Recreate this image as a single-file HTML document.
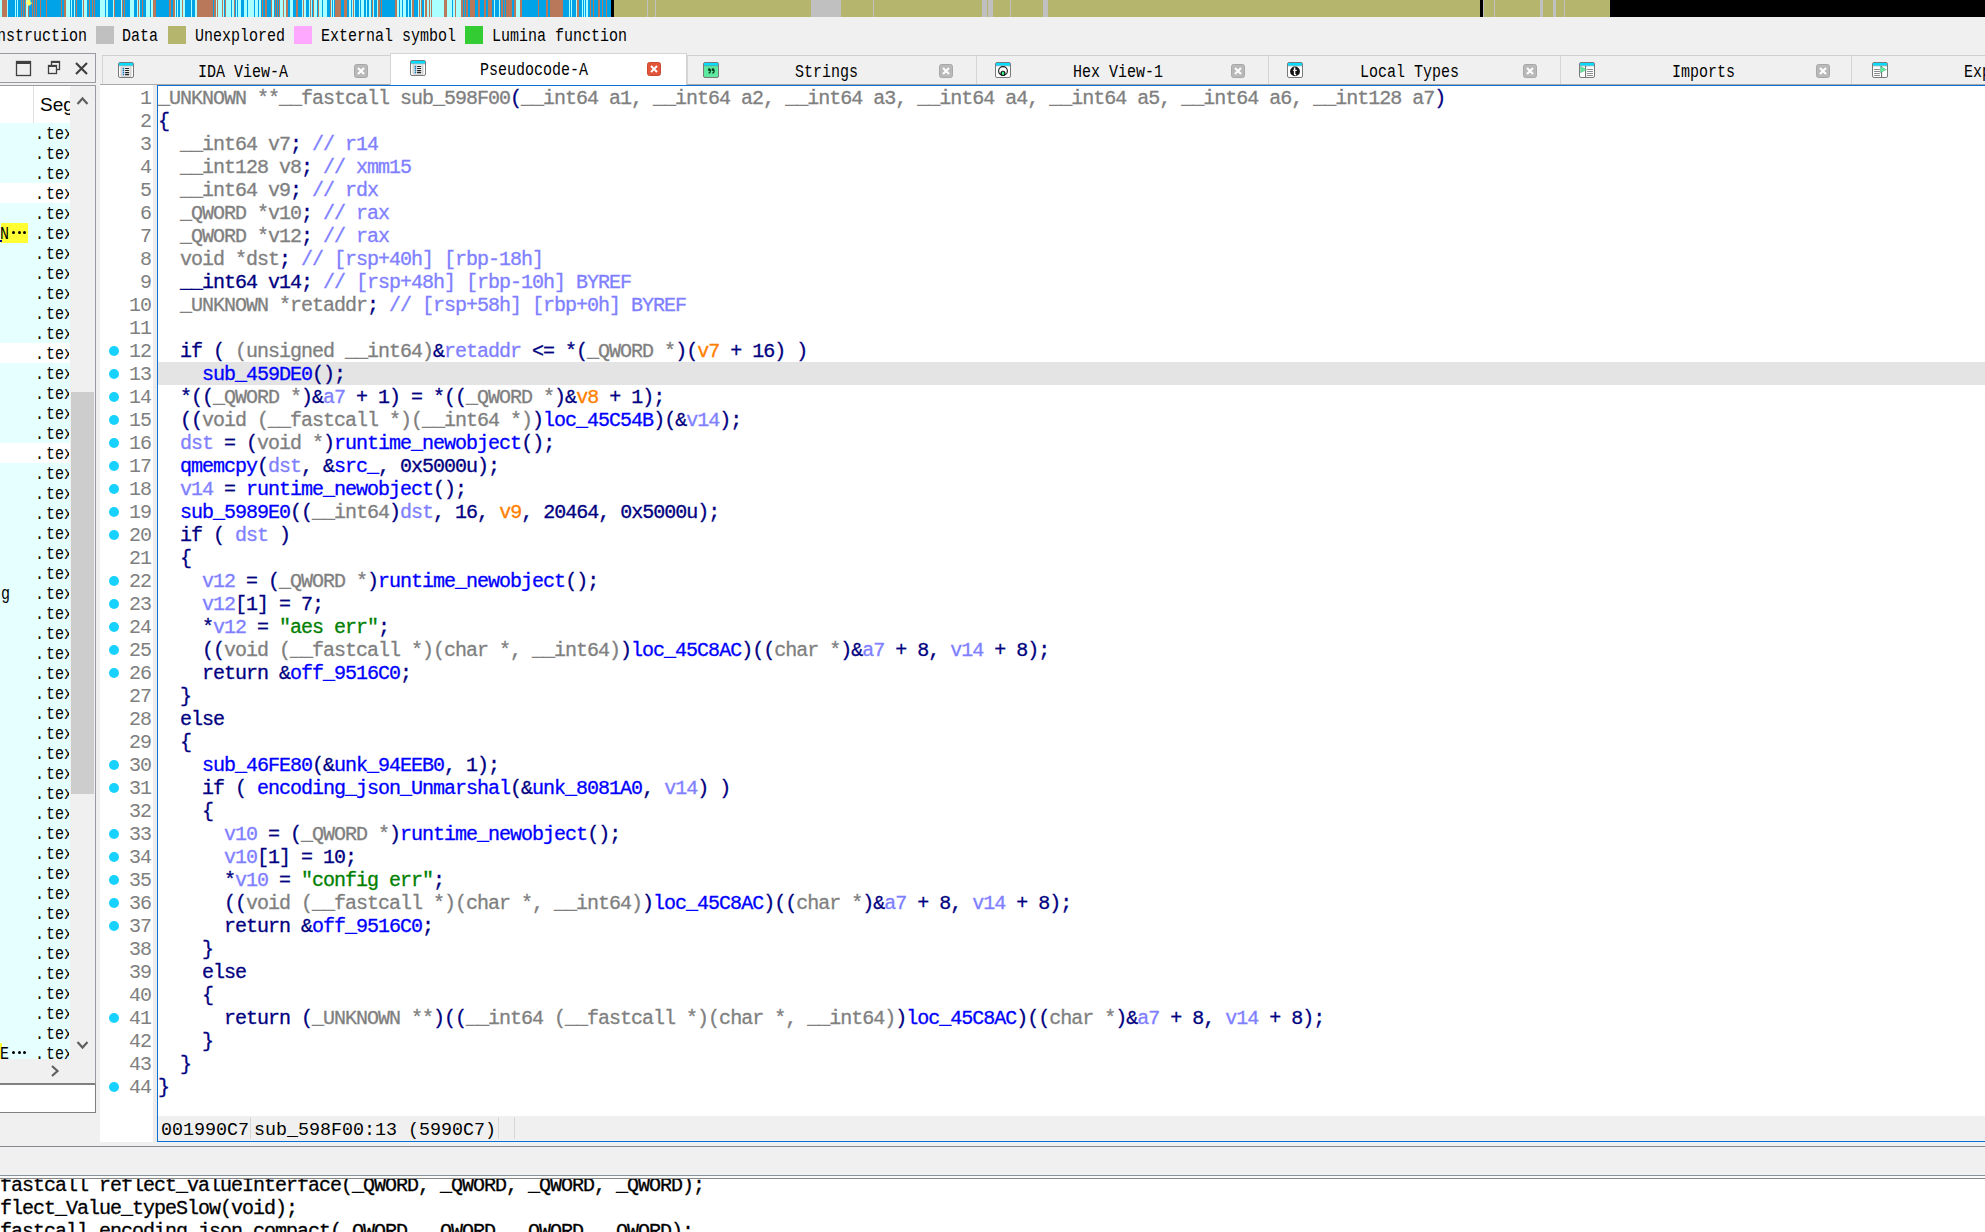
<!DOCTYPE html>
<html><head><meta charset="utf-8"><title>IDA</title><style>
html,body{margin:0;padding:0}
body{width:1985px;height:1232px;position:relative;overflow:hidden;background:#f0f0f0}
.ui{position:absolute;white-space:pre;font-family:"Liberation Mono",monospace;font-size:18px;line-height:20px;color:#000;transform:scaleX(0.83322);transform-origin:0 0}
.sq{position:absolute;top:26px;width:18px;height:18px}
.cl{position:absolute;left:158px;white-space:pre;font-family:"Liberation Mono",monospace;font-size:20px;letter-spacing:-1px;line-height:23px;height:23px;color:#000080;-webkit-text-stroke:0.3px currentColor}
.ln{position:absolute;left:100px;width:51px;text-align:right;white-space:pre;font-family:"Liberation Mono",monospace;font-size:20px;letter-spacing:-1px;line-height:23px;color:#808080}
.dot{position:absolute;left:109px;width:10px;height:10px;border-radius:50%;background:#17d1ff}
.g{color:#808080}.n{color:#000080}.b{color:#0000ff}.v{color:#8080ff}.o{color:#ff8000}.s{color:#008000}.c{color:#8080ff}
.ol{color:#000;left:0}
</style></head>
<body><svg style="position:absolute;left:0;top:0" width="1985" height="17" shape-rendering="crispEdges"><rect x="0" y="0" width="611" height="17" fill="#00a2e8"/><rect x="0.0" y="0" width="2.0" height="17" fill="#aaffff"/><rect x="7.0" y="0" width="1.0" height="17" fill="#aaffff"/><rect x="15.0" y="0" width="1.0" height="17" fill="#aaffff"/><rect x="17.0" y="0" width="1.0" height="17" fill="#aaffff"/><rect x="21.0" y="0" width="1.0" height="17" fill="#aaffff"/><rect x="26.0" y="0" width="2.0" height="17" fill="#aaffff"/><rect x="66.0" y="0" width="4.0" height="17" fill="#aaffff"/><rect x="71.0" y="0" width="1.0" height="17" fill="#aaffff"/><rect x="74.0" y="0" width="1.0" height="17" fill="#aaffff"/><rect x="81.5" y="0" width="1.2" height="17" fill="#aaffff"/><rect x="84.0" y="0" width="3.0" height="17" fill="#aaffff"/><rect x="99.6" y="0" width="5.4" height="17" fill="#aaffff"/><rect x="106.0" y="0" width="2.0" height="17" fill="#aaffff"/><rect x="113.0" y="0" width="1.0" height="17" fill="#aaffff"/><rect x="121.0" y="0" width="1.0" height="17" fill="#aaffff"/><rect x="130.0" y="0" width="4.0" height="17" fill="#aaffff"/><rect x="137.0" y="0" width="1.0" height="17" fill="#aaffff"/><rect x="139.0" y="0" width="1.0" height="17" fill="#aaffff"/><rect x="146.0" y="0" width="4.0" height="17" fill="#aaffff"/><rect x="151.0" y="0" width="2.0" height="17" fill="#aaffff"/><rect x="175.0" y="0" width="1.0" height="17" fill="#aaffff"/><rect x="177.0" y="0" width="1.0" height="17" fill="#aaffff"/><rect x="180.0" y="0" width="2.0" height="17" fill="#aaffff"/><rect x="183.0" y="0" width="2.0" height="17" fill="#aaffff"/><rect x="191.0" y="0" width="1.0" height="17" fill="#aaffff"/><rect x="195.0" y="0" width="2.0" height="17" fill="#aaffff"/><rect x="215.5" y="0" width="1.5" height="17" fill="#aaffff"/><rect x="218.0" y="0" width="4.0" height="17" fill="#aaffff"/><rect x="223.0" y="0" width="1.0" height="17" fill="#aaffff"/><rect x="226.0" y="0" width="5.0" height="17" fill="#aaffff"/><rect x="232.0" y="0" width="2.0" height="17" fill="#aaffff"/><rect x="235.5" y="0" width="1.5" height="17" fill="#aaffff"/><rect x="238.0" y="0" width="3.0" height="17" fill="#aaffff"/><rect x="244.0" y="0" width="3.0" height="17" fill="#aaffff"/><rect x="248.0" y="0" width="6.0" height="17" fill="#aaffff"/><rect x="255.0" y="0" width="3.0" height="17" fill="#aaffff"/><rect x="259.0" y="0" width="2.0" height="17" fill="#aaffff"/><rect x="272.0" y="0" width="2.0" height="17" fill="#aaffff"/><rect x="280.0" y="0" width="3.0" height="17" fill="#aaffff"/><rect x="284.0" y="0" width="2.0" height="17" fill="#aaffff"/><rect x="290.0" y="0" width="3.0" height="17" fill="#aaffff"/><rect x="302.0" y="0" width="1.0" height="17" fill="#aaffff"/><rect x="304.0" y="0" width="2.0" height="17" fill="#aaffff"/><rect x="309.0" y="0" width="1.0" height="17" fill="#aaffff"/><rect x="311.0" y="0" width="1.0" height="17" fill="#aaffff"/><rect x="314.0" y="0" width="3.0" height="17" fill="#aaffff"/><rect x="319.0" y="0" width="3.0" height="17" fill="#aaffff"/><rect x="323.0" y="0" width="4.0" height="17" fill="#aaffff"/><rect x="330.0" y="0" width="2.0" height="17" fill="#aaffff"/><rect x="333.0" y="0" width="1.0" height="17" fill="#aaffff"/><rect x="349.0" y="0" width="2.0" height="17" fill="#aaffff"/><rect x="352.0" y="0" width="1.0" height="17" fill="#aaffff"/><rect x="354.0" y="0" width="1.0" height="17" fill="#aaffff"/><rect x="359.0" y="0" width="1.0" height="17" fill="#aaffff"/><rect x="361.0" y="0" width="3.0" height="17" fill="#aaffff"/><rect x="366.0" y="0" width="1.0" height="17" fill="#aaffff"/><rect x="369.0" y="0" width="2.0" height="17" fill="#aaffff"/><rect x="373.0" y="0" width="1.0" height="17" fill="#aaffff"/><rect x="377.0" y="0" width="1.0" height="17" fill="#aaffff"/><rect x="397.0" y="0" width="2.0" height="17" fill="#aaffff"/><rect x="400.0" y="0" width="2.0" height="17" fill="#aaffff"/><rect x="403.0" y="0" width="3.0" height="17" fill="#aaffff"/><rect x="408.0" y="0" width="1.0" height="17" fill="#aaffff"/><rect x="411.0" y="0" width="1.0" height="17" fill="#aaffff"/><rect x="418.0" y="0" width="1.0" height="17" fill="#aaffff"/><rect x="420.0" y="0" width="1.0" height="17" fill="#aaffff"/><rect x="424.0" y="0" width="1.0" height="17" fill="#aaffff"/><rect x="427.0" y="0" width="2.0" height="17" fill="#aaffff"/><rect x="430.0" y="0" width="1.0" height="17" fill="#aaffff"/><rect x="432.0" y="0" width="12.0" height="17" fill="#aaffff"/><rect x="447.0" y="0" width="5.0" height="17" fill="#aaffff"/><rect x="453.0" y="0" width="2.0" height="17" fill="#aaffff"/><rect x="456.0" y="0" width="5.0" height="17" fill="#aaffff"/><rect x="494.0" y="0" width="1.0" height="17" fill="#aaffff"/><rect x="499.0" y="0" width="1.0" height="17" fill="#aaffff"/><rect x="516.0" y="0" width="4.0" height="17" fill="#aaffff"/><rect x="569.0" y="0" width="1.0" height="17" fill="#aaffff"/><rect x="571.0" y="0" width="1.0" height="17" fill="#aaffff"/><rect x="576.0" y="0" width="1.0" height="17" fill="#aaffff"/><rect x="582.0" y="0" width="1.0" height="17" fill="#aaffff"/><rect x="584.0" y="0" width="1.0" height="17" fill="#aaffff"/><rect x="586.0" y="0" width="2.0" height="17" fill="#aaffff"/><rect x="2.0" y="0" width="5.0" height="17" fill="#b9785a"/><rect x="20.5" y="0" width="1.0" height="17" fill="#b9785a"/><rect x="23.0" y="0" width="1.0" height="17" fill="#b9785a"/><rect x="25.0" y="0" width="1.0" height="17" fill="#b9785a"/><rect x="28.0" y="0" width="1.0" height="17" fill="#b9785a"/><rect x="31.5" y="0" width="1.0" height="17" fill="#b9785a"/><rect x="33.5" y="0" width="1.0" height="17" fill="#b9785a"/><rect x="35.5" y="0" width="1.0" height="17" fill="#b9785a"/><rect x="39.5" y="0" width="1.0" height="17" fill="#b9785a"/><rect x="46.4" y="0" width="1.0" height="17" fill="#b9785a"/><rect x="61.0" y="0" width="1.0" height="17" fill="#b9785a"/><rect x="64.0" y="0" width="2.0" height="17" fill="#b9785a"/><rect x="76.0" y="0" width="1.0" height="17" fill="#b9785a"/><rect x="83.0" y="0" width="1.0" height="17" fill="#b9785a"/><rect x="89.0" y="0" width="1.0" height="17" fill="#b9785a"/><rect x="91.5" y="0" width="1.0" height="17" fill="#b9785a"/><rect x="93.5" y="0" width="1.0" height="17" fill="#b9785a"/><rect x="114.0" y="0" width="1.0" height="17" fill="#b9785a"/><rect x="122.0" y="0" width="1.0" height="17" fill="#b9785a"/><rect x="123.5" y="0" width="1.0" height="17" fill="#b9785a"/><rect x="138.0" y="0" width="1.0" height="17" fill="#b9785a"/><rect x="142.0" y="0" width="1.0" height="17" fill="#b9785a"/><rect x="153.0" y="0" width="3.0" height="17" fill="#b9785a"/><rect x="169.0" y="0" width="2.0" height="17" fill="#b9785a"/><rect x="173.0" y="0" width="2.0" height="17" fill="#b9785a"/><rect x="182.0" y="0" width="1.0" height="17" fill="#b9785a"/><rect x="197.0" y="0" width="16.0" height="17" fill="#b9785a"/><rect x="214.0" y="0" width="2.0" height="17" fill="#b9785a"/><rect x="217.0" y="0" width="1.0" height="17" fill="#b9785a"/><rect x="222.0" y="0" width="1.0" height="17" fill="#b9785a"/><rect x="224.5" y="0" width="1.0" height="17" fill="#b9785a"/><rect x="234.0" y="0" width="1.0" height="17" fill="#b9785a"/><rect x="261.5" y="0" width="1.0" height="17" fill="#b9785a"/><rect x="265.0" y="0" width="2.0" height="17" fill="#b9785a"/><rect x="270.5" y="0" width="1.0" height="17" fill="#b9785a"/><rect x="274.5" y="0" width="1.0" height="17" fill="#b9785a"/><rect x="277.0" y="0" width="1.0" height="17" fill="#b9785a"/><rect x="279.0" y="0" width="1.0" height="17" fill="#b9785a"/><rect x="283.0" y="0" width="1.0" height="17" fill="#b9785a"/><rect x="286.0" y="0" width="2.0" height="17" fill="#b9785a"/><rect x="296.0" y="0" width="2.0" height="17" fill="#b9785a"/><rect x="303.0" y="0" width="1.0" height="17" fill="#b9785a"/><rect x="310.0" y="0" width="1.0" height="17" fill="#b9785a"/><rect x="313.0" y="0" width="1.0" height="17" fill="#b9785a"/><rect x="318.0" y="0" width="1.0" height="17" fill="#b9785a"/><rect x="329.5" y="0" width="1.0" height="17" fill="#b9785a"/><rect x="335.0" y="0" width="6.0" height="17" fill="#b9785a"/><rect x="344.0" y="0" width="3.0" height="17" fill="#b9785a"/><rect x="353.0" y="0" width="1.0" height="17" fill="#b9785a"/><rect x="372.0" y="0" width="1.0" height="17" fill="#b9785a"/><rect x="378.0" y="0" width="2.0" height="17" fill="#b9785a"/><rect x="380.5" y="0" width="1.0" height="17" fill="#b9785a"/><rect x="395.0" y="0" width="2.0" height="17" fill="#b9785a"/><rect x="412.0" y="0" width="2.0" height="17" fill="#b9785a"/><rect x="419.0" y="0" width="1.0" height="17" fill="#b9785a"/><rect x="421.0" y="0" width="1.0" height="17" fill="#b9785a"/><rect x="425.0" y="0" width="2.0" height="17" fill="#b9785a"/><rect x="429.0" y="0" width="1.0" height="17" fill="#b9785a"/><rect x="431.0" y="0" width="1.0" height="17" fill="#b9785a"/><rect x="444.0" y="0" width="3.0" height="17" fill="#b9785a"/><rect x="455.0" y="0" width="1.0" height="17" fill="#b9785a"/><rect x="461.0" y="0" width="2.0" height="17" fill="#b9785a"/><rect x="463.5" y="0" width="1.5" height="17" fill="#b9785a"/><rect x="466.0" y="0" width="2.0" height="17" fill="#b9785a"/><rect x="470.0" y="0" width="5.0" height="17" fill="#b9785a"/><rect x="478.0" y="0" width="2.0" height="17" fill="#b9785a"/><rect x="484.0" y="0" width="2.0" height="17" fill="#b9785a"/><rect x="488.0" y="0" width="4.0" height="17" fill="#b9785a"/><rect x="501.0" y="0" width="1.5" height="17" fill="#b9785a"/><rect x="504.0" y="0" width="1.0" height="17" fill="#b9785a"/><rect x="506.0" y="0" width="6.0" height="17" fill="#b9785a"/><rect x="513.5" y="0" width="2.5" height="17" fill="#b9785a"/><rect x="520.0" y="0" width="2.0" height="17" fill="#b9785a"/><rect x="538.0" y="0" width="1.0" height="17" fill="#b9785a"/><rect x="546.0" y="0" width="2.0" height="17" fill="#b9785a"/><rect x="550.0" y="0" width="13.0" height="17" fill="#b9785a"/><rect x="577.0" y="0" width="2.0" height="17" fill="#b9785a"/><rect x="590.0" y="0" width="1.0" height="17" fill="#b9785a"/><rect x="593.0" y="0" width="1.0" height="17" fill="#b9785a"/><rect x="598.0" y="0" width="1.5" height="17" fill="#b9785a"/><rect x="602.0" y="0" width="1.0" height="17" fill="#b9785a"/><rect x="605.5" y="0" width="1.0" height="17" fill="#b9785a"/><rect x="610.5" y="0" width="3.5" height="17" fill="#000000"/><rect x="614" y="0" width="996" height="17" fill="#b5b56d"/><rect x="647.0" y="0" width="1.0" height="17" fill="#c0c0c0"/><rect x="655.0" y="0" width="1.0" height="17" fill="#c0c0c0"/><rect x="811.0" y="0" width="30.0" height="17" fill="#c0c0c0"/><rect x="873.0" y="0" width="1.0" height="17" fill="#c0c0c0"/><rect x="982.0" y="0" width="4.5" height="17" fill="#c0c0c0"/><rect x="987.5" y="0" width="1.0" height="17" fill="#c0c0c0"/><rect x="989.0" y="0" width="4.0" height="17" fill="#c0c0c0"/><rect x="1010.0" y="0" width="1.0" height="17" fill="#c0c0c0"/><rect x="1043.0" y="0" width="5.0" height="17" fill="#c0c0c0"/><rect x="1483.0" y="0" width="1.0" height="17" fill="#c0c0c0"/><rect x="1494.0" y="0" width="1.0" height="17" fill="#c0c0c0"/><rect x="1540.0" y="0" width="3.0" height="17" fill="#c0c0c0"/><rect x="1553.0" y="0" width="2.5" height="17" fill="#c0c0c0"/><rect x="1564.0" y="0" width="1.0" height="17" fill="#c0c0c0"/><rect x="1479.5" y="0" width="3.5" height="17" fill="#000000"/><rect x="1610" y="0" width="375" height="17" fill="#000000"/><path d="M27.5 0 L30.5 0 L30.5 2.5 L32.5 2.5 L29 6 L25.5 2.5 L27.5 2.5 Z" fill="#ffff60" shape-rendering="geometricPrecision"/></svg><div class="ui" style="left:-3px;top:26px;">nstruction</div><div class="sq" style="left:96px;background:#c0c0c0"></div><div class="ui" style="left:122px;top:26px;">Data</div><div class="sq" style="left:168px;background:#b5b56d"></div><div class="ui" style="left:195px;top:26px;">Unexplored</div><div class="sq" style="left:294px;background:#ffa8ff"></div><div class="ui" style="left:321px;top:26px;">External symbol</div><div class="sq" style="left:465px;background:#33cc33"></div><div class="ui" style="left:492px;top:26px;">Lumina function</div><div style="position:absolute;left:-2px;top:53px;width:98px;height:30px;border:1px solid #9a9aa2;box-sizing:border-box;background:#f0f0f0"></div><svg style="position:absolute;left:0;top:53px" width="96" height="30"><rect x="16.5" y="8.5" width="14" height="14" fill="none" stroke="#404040" stroke-width="1.3"/><rect x="16" y="8" width="15" height="3" fill="#404040"/><rect x="51.5" y="8.5" width="8" height="8" fill="none" stroke="#404040" stroke-width="1.3"/><rect x="51" y="8" width="9" height="2" fill="#404040"/><rect x="48.5" y="12.5" width="8" height="8" fill="#f0f0f0" stroke="#404040" stroke-width="1.3"/><rect x="48" y="12" width="9" height="2" fill="#404040"/><path d="M76 10 L87 21 M87 10 L76 21" stroke="#404040" stroke-width="2.2"/></svg><div style="position:absolute;left:-2px;top:85px;width:98px;height:1000px;border:1px solid #9a9aa2;border-bottom:2px solid #808080;box-sizing:border-box;background:#f0f0f0"></div><div style="position:absolute;left:0;top:86px;width:70px;height:37px;background:#fff"></div><div style="position:absolute;left:33px;top:86px;width:1px;height:37px;background:#e0e0e0"></div><div style="position:absolute;left:40px;top:94px;font-family:'Liberation Sans',sans-serif;font-size:19px;line-height:22px;color:#000;white-space:pre;width:30px;overflow:hidden">Seg</div><div style="position:absolute;left:0;top:123px;width:70px;height:20px;background:#e6ffff;overflow:hidden"><div style="position:absolute;left:0;top:0;width:69px;height:20px;overflow:hidden"><div class="ui" style="left:34.7px;top:1px">.</div><div class="ui" style="left:46.2px;top:1px">tex</div></div></div><div style="position:absolute;left:0;top:143px;width:70px;height:20px;background:#e6ffff;overflow:hidden"><div style="position:absolute;left:0;top:0;width:69px;height:20px;overflow:hidden"><div class="ui" style="left:34.7px;top:1px">.</div><div class="ui" style="left:46.2px;top:1px">tex</div></div></div><div style="position:absolute;left:0;top:163px;width:70px;height:20px;background:#e6ffff;overflow:hidden"><div style="position:absolute;left:0;top:0;width:69px;height:20px;overflow:hidden"><div class="ui" style="left:34.7px;top:1px">.</div><div class="ui" style="left:46.2px;top:1px">tex</div></div></div><div style="position:absolute;left:0;top:183px;width:70px;height:20px;background:#ffffff;overflow:hidden"><div style="position:absolute;left:0;top:0;width:69px;height:20px;overflow:hidden"><div class="ui" style="left:34.7px;top:1px">.</div><div class="ui" style="left:46.2px;top:1px">tex</div></div></div><div style="position:absolute;left:0;top:203px;width:70px;height:20px;background:#e6ffff;overflow:hidden"><div style="position:absolute;left:0;top:0;width:69px;height:20px;overflow:hidden"><div class="ui" style="left:34.7px;top:1px">.</div><div class="ui" style="left:46.2px;top:1px">tex</div></div></div><div style="position:absolute;left:0;top:223px;width:70px;height:20px;background:#e6ffff;overflow:hidden"><div style="position:absolute;left:0;top:0;width:69px;height:20px;overflow:hidden"><div class="ui" style="left:34.7px;top:1px">.</div><div class="ui" style="left:46.2px;top:1px">tex</div></div><div style="position:absolute;left:1px;top:0;width:27px;height:20px;background:#ffff33"></div><div style="position:absolute;left:0;top:17px;width:1.5px;height:1.5px;background:#000080"></div><div class="ui" style="left:-0.5px;top:1px">N</div><div style="position:absolute;left:11.8px;top:8px;width:3px;height:3px;border-radius:50%;background:#000"></div><div style="position:absolute;left:17.6px;top:8px;width:3px;height:3px;border-radius:50%;background:#000"></div><div style="position:absolute;left:23.1px;top:8px;width:3px;height:3px;border-radius:50%;background:#000"></div></div><div style="position:absolute;left:0;top:243px;width:70px;height:20px;background:#e6ffff;overflow:hidden"><div style="position:absolute;left:0;top:0;width:69px;height:20px;overflow:hidden"><div class="ui" style="left:34.7px;top:1px">.</div><div class="ui" style="left:46.2px;top:1px">tex</div></div></div><div style="position:absolute;left:0;top:263px;width:70px;height:20px;background:#e6ffff;overflow:hidden"><div style="position:absolute;left:0;top:0;width:69px;height:20px;overflow:hidden"><div class="ui" style="left:34.7px;top:1px">.</div><div class="ui" style="left:46.2px;top:1px">tex</div></div></div><div style="position:absolute;left:0;top:283px;width:70px;height:20px;background:#e6ffff;overflow:hidden"><div style="position:absolute;left:0;top:0;width:69px;height:20px;overflow:hidden"><div class="ui" style="left:34.7px;top:1px">.</div><div class="ui" style="left:46.2px;top:1px">tex</div></div></div><div style="position:absolute;left:0;top:303px;width:70px;height:20px;background:#e6ffff;overflow:hidden"><div style="position:absolute;left:0;top:0;width:69px;height:20px;overflow:hidden"><div class="ui" style="left:34.7px;top:1px">.</div><div class="ui" style="left:46.2px;top:1px">tex</div></div></div><div style="position:absolute;left:0;top:323px;width:70px;height:20px;background:#e6ffff;overflow:hidden"><div style="position:absolute;left:0;top:0;width:69px;height:20px;overflow:hidden"><div class="ui" style="left:34.7px;top:1px">.</div><div class="ui" style="left:46.2px;top:1px">tex</div></div></div><div style="position:absolute;left:0;top:343px;width:70px;height:20px;background:#ffffff;overflow:hidden"><div style="position:absolute;left:0;top:0;width:69px;height:20px;overflow:hidden"><div class="ui" style="left:34.7px;top:1px">.</div><div class="ui" style="left:46.2px;top:1px">tex</div></div></div><div style="position:absolute;left:0;top:363px;width:70px;height:20px;background:#e6ffff;overflow:hidden"><div style="position:absolute;left:0;top:0;width:69px;height:20px;overflow:hidden"><div class="ui" style="left:34.7px;top:1px">.</div><div class="ui" style="left:46.2px;top:1px">tex</div></div></div><div style="position:absolute;left:0;top:383px;width:70px;height:20px;background:#e6ffff;overflow:hidden"><div style="position:absolute;left:0;top:0;width:69px;height:20px;overflow:hidden"><div class="ui" style="left:34.7px;top:1px">.</div><div class="ui" style="left:46.2px;top:1px">tex</div></div></div><div style="position:absolute;left:0;top:403px;width:70px;height:20px;background:#e6ffff;overflow:hidden"><div style="position:absolute;left:0;top:0;width:69px;height:20px;overflow:hidden"><div class="ui" style="left:34.7px;top:1px">.</div><div class="ui" style="left:46.2px;top:1px">tex</div></div></div><div style="position:absolute;left:0;top:423px;width:70px;height:20px;background:#e6ffff;overflow:hidden"><div style="position:absolute;left:0;top:0;width:69px;height:20px;overflow:hidden"><div class="ui" style="left:34.7px;top:1px">.</div><div class="ui" style="left:46.2px;top:1px">tex</div></div></div><div style="position:absolute;left:0;top:443px;width:70px;height:20px;background:#ffffff;overflow:hidden"><div style="position:absolute;left:0;top:0;width:69px;height:20px;overflow:hidden"><div class="ui" style="left:34.7px;top:1px">.</div><div class="ui" style="left:46.2px;top:1px">tex</div></div></div><div style="position:absolute;left:0;top:463px;width:70px;height:20px;background:#e6ffff;overflow:hidden"><div style="position:absolute;left:0;top:0;width:69px;height:20px;overflow:hidden"><div class="ui" style="left:34.7px;top:1px">.</div><div class="ui" style="left:46.2px;top:1px">tex</div></div></div><div style="position:absolute;left:0;top:483px;width:70px;height:20px;background:#e6ffff;overflow:hidden"><div style="position:absolute;left:0;top:0;width:69px;height:20px;overflow:hidden"><div class="ui" style="left:34.7px;top:1px">.</div><div class="ui" style="left:46.2px;top:1px">tex</div></div></div><div style="position:absolute;left:0;top:503px;width:70px;height:20px;background:#e6ffff;overflow:hidden"><div style="position:absolute;left:0;top:0;width:69px;height:20px;overflow:hidden"><div class="ui" style="left:34.7px;top:1px">.</div><div class="ui" style="left:46.2px;top:1px">tex</div></div></div><div style="position:absolute;left:0;top:523px;width:70px;height:20px;background:#e6ffff;overflow:hidden"><div style="position:absolute;left:0;top:0;width:69px;height:20px;overflow:hidden"><div class="ui" style="left:34.7px;top:1px">.</div><div class="ui" style="left:46.2px;top:1px">tex</div></div></div><div style="position:absolute;left:0;top:543px;width:70px;height:20px;background:#e6ffff;overflow:hidden"><div style="position:absolute;left:0;top:0;width:69px;height:20px;overflow:hidden"><div class="ui" style="left:34.7px;top:1px">.</div><div class="ui" style="left:46.2px;top:1px">tex</div></div></div><div style="position:absolute;left:0;top:563px;width:70px;height:20px;background:#e6ffff;overflow:hidden"><div style="position:absolute;left:0;top:0;width:69px;height:20px;overflow:hidden"><div class="ui" style="left:34.7px;top:1px">.</div><div class="ui" style="left:46.2px;top:1px">tex</div></div></div><div style="position:absolute;left:0;top:583px;width:70px;height:20px;background:#e6ffff;overflow:hidden"><div style="position:absolute;left:0;top:0;width:69px;height:20px;overflow:hidden"><div class="ui" style="left:34.7px;top:1px">.</div><div class="ui" style="left:46.2px;top:1px">tex</div></div><div class="ui" style="left:1px;top:1px">g</div></div><div style="position:absolute;left:0;top:603px;width:70px;height:20px;background:#e6ffff;overflow:hidden"><div style="position:absolute;left:0;top:0;width:69px;height:20px;overflow:hidden"><div class="ui" style="left:34.7px;top:1px">.</div><div class="ui" style="left:46.2px;top:1px">tex</div></div></div><div style="position:absolute;left:0;top:623px;width:70px;height:20px;background:#e6ffff;overflow:hidden"><div style="position:absolute;left:0;top:0;width:69px;height:20px;overflow:hidden"><div class="ui" style="left:34.7px;top:1px">.</div><div class="ui" style="left:46.2px;top:1px">tex</div></div></div><div style="position:absolute;left:0;top:643px;width:70px;height:20px;background:#e6ffff;overflow:hidden"><div style="position:absolute;left:0;top:0;width:69px;height:20px;overflow:hidden"><div class="ui" style="left:34.7px;top:1px">.</div><div class="ui" style="left:46.2px;top:1px">tex</div></div></div><div style="position:absolute;left:0;top:663px;width:70px;height:20px;background:#e6ffff;overflow:hidden"><div style="position:absolute;left:0;top:0;width:69px;height:20px;overflow:hidden"><div class="ui" style="left:34.7px;top:1px">.</div><div class="ui" style="left:46.2px;top:1px">tex</div></div></div><div style="position:absolute;left:0;top:683px;width:70px;height:20px;background:#e6ffff;overflow:hidden"><div style="position:absolute;left:0;top:0;width:69px;height:20px;overflow:hidden"><div class="ui" style="left:34.7px;top:1px">.</div><div class="ui" style="left:46.2px;top:1px">tex</div></div></div><div style="position:absolute;left:0;top:703px;width:70px;height:20px;background:#e6ffff;overflow:hidden"><div style="position:absolute;left:0;top:0;width:69px;height:20px;overflow:hidden"><div class="ui" style="left:34.7px;top:1px">.</div><div class="ui" style="left:46.2px;top:1px">tex</div></div></div><div style="position:absolute;left:0;top:723px;width:70px;height:20px;background:#e6ffff;overflow:hidden"><div style="position:absolute;left:0;top:0;width:69px;height:20px;overflow:hidden"><div class="ui" style="left:34.7px;top:1px">.</div><div class="ui" style="left:46.2px;top:1px">tex</div></div></div><div style="position:absolute;left:0;top:743px;width:70px;height:20px;background:#e6ffff;overflow:hidden"><div style="position:absolute;left:0;top:0;width:69px;height:20px;overflow:hidden"><div class="ui" style="left:34.7px;top:1px">.</div><div class="ui" style="left:46.2px;top:1px">tex</div></div></div><div style="position:absolute;left:0;top:763px;width:70px;height:20px;background:#e6ffff;overflow:hidden"><div style="position:absolute;left:0;top:0;width:69px;height:20px;overflow:hidden"><div class="ui" style="left:34.7px;top:1px">.</div><div class="ui" style="left:46.2px;top:1px">tex</div></div></div><div style="position:absolute;left:0;top:783px;width:70px;height:20px;background:#e6ffff;overflow:hidden"><div style="position:absolute;left:0;top:0;width:69px;height:20px;overflow:hidden"><div class="ui" style="left:34.7px;top:1px">.</div><div class="ui" style="left:46.2px;top:1px">tex</div></div></div><div style="position:absolute;left:0;top:803px;width:70px;height:20px;background:#e6ffff;overflow:hidden"><div style="position:absolute;left:0;top:0;width:69px;height:20px;overflow:hidden"><div class="ui" style="left:34.7px;top:1px">.</div><div class="ui" style="left:46.2px;top:1px">tex</div></div></div><div style="position:absolute;left:0;top:823px;width:70px;height:20px;background:#e6ffff;overflow:hidden"><div style="position:absolute;left:0;top:0;width:69px;height:20px;overflow:hidden"><div class="ui" style="left:34.7px;top:1px">.</div><div class="ui" style="left:46.2px;top:1px">tex</div></div></div><div style="position:absolute;left:0;top:843px;width:70px;height:20px;background:#e6ffff;overflow:hidden"><div style="position:absolute;left:0;top:0;width:69px;height:20px;overflow:hidden"><div class="ui" style="left:34.7px;top:1px">.</div><div class="ui" style="left:46.2px;top:1px">tex</div></div></div><div style="position:absolute;left:0;top:863px;width:70px;height:20px;background:#e6ffff;overflow:hidden"><div style="position:absolute;left:0;top:0;width:69px;height:20px;overflow:hidden"><div class="ui" style="left:34.7px;top:1px">.</div><div class="ui" style="left:46.2px;top:1px">tex</div></div></div><div style="position:absolute;left:0;top:883px;width:70px;height:20px;background:#e6ffff;overflow:hidden"><div style="position:absolute;left:0;top:0;width:69px;height:20px;overflow:hidden"><div class="ui" style="left:34.7px;top:1px">.</div><div class="ui" style="left:46.2px;top:1px">tex</div></div></div><div style="position:absolute;left:0;top:903px;width:70px;height:20px;background:#e6ffff;overflow:hidden"><div style="position:absolute;left:0;top:0;width:69px;height:20px;overflow:hidden"><div class="ui" style="left:34.7px;top:1px">.</div><div class="ui" style="left:46.2px;top:1px">tex</div></div></div><div style="position:absolute;left:0;top:923px;width:70px;height:20px;background:#e6ffff;overflow:hidden"><div style="position:absolute;left:0;top:0;width:69px;height:20px;overflow:hidden"><div class="ui" style="left:34.7px;top:1px">.</div><div class="ui" style="left:46.2px;top:1px">tex</div></div></div><div style="position:absolute;left:0;top:943px;width:70px;height:20px;background:#e6ffff;overflow:hidden"><div style="position:absolute;left:0;top:0;width:69px;height:20px;overflow:hidden"><div class="ui" style="left:34.7px;top:1px">.</div><div class="ui" style="left:46.2px;top:1px">tex</div></div></div><div style="position:absolute;left:0;top:963px;width:70px;height:20px;background:#e6ffff;overflow:hidden"><div style="position:absolute;left:0;top:0;width:69px;height:20px;overflow:hidden"><div class="ui" style="left:34.7px;top:1px">.</div><div class="ui" style="left:46.2px;top:1px">tex</div></div></div><div style="position:absolute;left:0;top:983px;width:70px;height:20px;background:#e6ffff;overflow:hidden"><div style="position:absolute;left:0;top:0;width:69px;height:20px;overflow:hidden"><div class="ui" style="left:34.7px;top:1px">.</div><div class="ui" style="left:46.2px;top:1px">tex</div></div></div><div style="position:absolute;left:0;top:1003px;width:70px;height:20px;background:#e6ffff;overflow:hidden"><div style="position:absolute;left:0;top:0;width:69px;height:20px;overflow:hidden"><div class="ui" style="left:34.7px;top:1px">.</div><div class="ui" style="left:46.2px;top:1px">tex</div></div></div><div style="position:absolute;left:0;top:1023px;width:70px;height:20px;background:#e6ffff;overflow:hidden"><div style="position:absolute;left:0;top:0;width:69px;height:20px;overflow:hidden"><div class="ui" style="left:34.7px;top:1px">.</div><div class="ui" style="left:46.2px;top:1px">tex</div></div></div><div style="position:absolute;left:0;top:1043px;width:70px;height:16px;background:#e6ffff;overflow:hidden"><div style="position:absolute;left:0;top:0;width:69px;height:20px;overflow:hidden"><div class="ui" style="left:34.7px;top:1px">.</div><div class="ui" style="left:46.2px;top:1px">tex</div></div><div style="position:absolute;left:0;top:0;width:1.5px;height:20px;background:#ffff33"></div><div class="ui" style="left:0px;top:1px">E</div><div style="position:absolute;left:11.8px;top:8px;width:3px;height:3px;border-radius:50%;background:#000"></div><div style="position:absolute;left:17.6px;top:8px;width:3px;height:3px;border-radius:50%;background:#000"></div><div style="position:absolute;left:23.1px;top:8px;width:3px;height:3px;border-radius:50%;background:#000"></div></div><div style="position:absolute;left:71px;top:392px;width:23px;height:402px;background:#cdcdcd"></div><svg style="position:absolute;left:70px;top:86px" width="25" height="1000"><path d="M7.5 18 L12.5 12.5 L17.5 18" fill="none" stroke="#606060" stroke-width="2.2"/><path d="M7.5 956 L12.5 961.5 L17.5 956" fill="none" stroke="#606060" stroke-width="2.2"/></svg><svg style="position:absolute;left:0;top:1059px" width="70" height="25"><path d="M52 7 L57.5 12 L52 17" fill="none" stroke="#606060" stroke-width="2.2"/></svg><div style="position:absolute;left:-2px;top:1085px;width:98px;height:28px;border:1px solid #808080;border-top:none;box-sizing:border-box;background:#fff"></div><div style="position:absolute;left:102px;top:55px;width:288px;height:30px;background:#f0f0f0;border-top:1px solid #d0d0d0;border-left:1px solid #d6d6d6;box-sizing:border-box"></div><div style="position:absolute;left:390px;top:53px;width:297px;height:32px;background:#fff;border:1px solid #d4d4d4;border-bottom:none;box-sizing:border-box"></div><div style="position:absolute;left:687px;top:55px;width:289px;height:30px;background:#f0f0f0;border-top:1px solid #d0d0d0;border-left:1px solid #d6d6d6;box-sizing:border-box"></div><div style="position:absolute;left:976px;top:55px;width:292px;height:30px;background:#f0f0f0;border-top:1px solid #d0d0d0;border-left:1px solid #d6d6d6;box-sizing:border-box"></div><div style="position:absolute;left:1268px;top:55px;width:292px;height:30px;background:#f0f0f0;border-top:1px solid #d0d0d0;border-left:1px solid #d6d6d6;box-sizing:border-box"></div><div style="position:absolute;left:1560px;top:55px;width:291px;height:30px;background:#f0f0f0;border-top:1px solid #d0d0d0;border-left:1px solid #d6d6d6;box-sizing:border-box"></div><div style="position:absolute;left:1851px;top:55px;width:134px;height:30px;background:#f0f0f0;border-top:1px solid #d0d0d0;border-left:1px solid #d6d6d6;box-sizing:border-box"></div><svg style="position:absolute;left:118px;top:62px" width="16" height="16" viewBox="0 0 16 16"><rect x="0.5" y="0.5" width="15" height="15" rx="1.5" fill="#ffffff" stroke="#7a7a7a"/><rect x="1" y="1" width="14" height="2.6" fill="#05dcff"/><rect x="1" y="3.6" width="14" height="0.6" fill="#5a8a96"/><rect x="2.6" y="4.4" width="10.8" height="10.4" rx="1.2" fill="#c4c4c4"/><rect x="3.6" y="4.8" width="8.8" height="9.4" rx="0.8" fill="#ececec"/><circle cx="5.4" cy="6.5" r="0.9" fill="#1a7ec0"/><rect x="7" y="6.0" width="4.2" height="1.1" rx="0.5" fill="#222"/><circle cx="5.4" cy="8.5" r="0.9" fill="#1a7ec0"/><rect x="7" y="8.0" width="4.2" height="1.1" rx="0.5" fill="#222"/><circle cx="5.4" cy="10.6" r="0.9" fill="#1a7ec0"/><rect x="7" y="10.1" width="4.2" height="1.1" rx="0.5" fill="#222"/><circle cx="5.4" cy="12.6" r="0.9" fill="#1a7ec0"/><rect x="7" y="12.1" width="4.2" height="1.1" rx="0.5" fill="#222"/></svg><div class="ui tab" style="left:198px;top:62px">IDA View-A</div><svg style="position:absolute;left:354px;top:64px" width="14" height="14" viewBox="0 0 14 14"><rect x="0.5" y="0.5" width="13" height="13" rx="2" fill="#b9b9b9" stroke="#a8a8a8"/><path d="M4 4 L10 10 M10 4 L4 10" stroke="#fff" stroke-width="2"/></svg><svg style="position:absolute;left:410px;top:60px" width="16" height="16" viewBox="0 0 16 16"><rect x="0.5" y="0.5" width="15" height="15" rx="1.5" fill="#ffffff" stroke="#7a7a7a"/><rect x="1" y="1" width="14" height="2.6" fill="#05dcff"/><rect x="1" y="3.6" width="14" height="0.6" fill="#5a8a96"/><rect x="2.6" y="4.4" width="10.8" height="10.4" rx="1.2" fill="#c4c4c4"/><rect x="3.6" y="4.8" width="8.8" height="9.4" rx="0.8" fill="#ececec"/><circle cx="5.4" cy="6.5" r="0.9" fill="#1a7ec0"/><rect x="7" y="6.0" width="4.2" height="1.1" rx="0.5" fill="#222"/><circle cx="5.4" cy="8.5" r="0.9" fill="#1a7ec0"/><rect x="7" y="8.0" width="4.2" height="1.1" rx="0.5" fill="#222"/><circle cx="5.4" cy="10.6" r="0.9" fill="#1a7ec0"/><rect x="7" y="10.1" width="4.2" height="1.1" rx="0.5" fill="#222"/><circle cx="5.4" cy="12.6" r="0.9" fill="#1a7ec0"/><rect x="7" y="12.1" width="4.2" height="1.1" rx="0.5" fill="#222"/></svg><div class="ui tab" style="left:480px;top:60px">Pseudocode-A</div><svg style="position:absolute;left:647px;top:62px" width="14" height="14" viewBox="0 0 14 14"><rect x="0.5" y="0.5" width="13" height="13" rx="2" fill="#e2553a" stroke="#c94a30"/><path d="M4 4 L10 10 M10 4 L4 10" stroke="#fff" stroke-width="2"/></svg><svg style="position:absolute;left:703px;top:62px" width="16" height="16" viewBox="0 0 16 16"><rect x="0.5" y="0.5" width="15" height="15" rx="1.5" fill="#5fe8a0" stroke="#7a7a7a"/><rect x="1" y="1" width="14" height="2.6" fill="#05dcff"/><rect x="1" y="3.6" width="14" height="0.6" fill="#5a8a96"/><circle cx="6.3" cy="7.7" r="1.4" fill="#063a1a"/><path d="M7.6 7.9 Q7.6 10.6 5.6 11.2" stroke="#063a1a" stroke-width="1.2" fill="none"/><circle cx="10.0" cy="7.7" r="1.4" fill="#063a1a"/><path d="M11.3 7.9 Q11.3 10.6 9.3 11.2" stroke="#063a1a" stroke-width="1.2" fill="none"/></svg><div class="ui tab" style="left:795px;top:62px">Strings</div><svg style="position:absolute;left:939px;top:64px" width="14" height="14" viewBox="0 0 14 14"><rect x="0.5" y="0.5" width="13" height="13" rx="2" fill="#b9b9b9" stroke="#a8a8a8"/><path d="M4 4 L10 10 M10 4 L4 10" stroke="#fff" stroke-width="2"/></svg><svg style="position:absolute;left:995px;top:62px" width="16" height="16" viewBox="0 0 16 16"><rect x="0.5" y="0.5" width="15" height="15" rx="1.5" fill="#ffffff" stroke="#7a7a7a"/><rect x="1" y="1" width="14" height="2.6" fill="#05dcff"/><rect x="1" y="3.6" width="14" height="0.6" fill="#5a8a96"/><circle cx="8" cy="9" r="4.4" fill="none" stroke="#1a1a1a" stroke-width="1.1"/><circle cx="8" cy="11.4" r="2.6" fill="#1a1a1a"/><ellipse cx="8" cy="11.4" rx="1.2" ry="1.8" fill="#3af08a"/></svg><div class="ui tab" style="left:1073px;top:62px">Hex View-1</div><svg style="position:absolute;left:1231px;top:64px" width="14" height="14" viewBox="0 0 14 14"><rect x="0.5" y="0.5" width="13" height="13" rx="2" fill="#b9b9b9" stroke="#a8a8a8"/><path d="M4 4 L10 10 M10 4 L4 10" stroke="#fff" stroke-width="2"/></svg><svg style="position:absolute;left:1287px;top:62px" width="16" height="16" viewBox="0 0 16 16"><rect x="0.5" y="0.5" width="15" height="15" rx="1.5" fill="#ffffff" stroke="#7a7a7a"/><rect x="1" y="1" width="14" height="2.6" fill="#05dcff"/><rect x="1" y="3.6" width="14" height="0.6" fill="#5a8a96"/><circle cx="8" cy="9.4" r="4.9" fill="#141414"/><path d="M7.6 5.6 L7.6 12.0 Q7.8 13.0 9.2 12.6" stroke="#fff" stroke-width="1.5" fill="none"/><rect x="6.2" y="7.8" width="3.6" height="1.2" fill="#fff"/></svg><div class="ui tab" style="left:1360px;top:62px">Local Types</div><svg style="position:absolute;left:1523px;top:64px" width="14" height="14" viewBox="0 0 14 14"><rect x="0.5" y="0.5" width="13" height="13" rx="2" fill="#b9b9b9" stroke="#a8a8a8"/><path d="M4 4 L10 10 M10 4 L4 10" stroke="#fff" stroke-width="2"/></svg><svg style="position:absolute;left:1579px;top:62px" width="16" height="16" viewBox="0 0 16 16"><rect x="0.5" y="0.5" width="15" height="15" rx="1.5" fill="#ffffff" stroke="#7a7a7a"/><rect x="1" y="1" width="14" height="2.6" fill="#05dcff"/><rect x="1" y="3.6" width="14" height="0.6" fill="#5a8a96"/><rect x="6" y="4" width="1.1" height="11.5" fill="#707070"/><rect x="8" y="7.0" width="6" height="1.1" rx="0.5" fill="#8a8a8a"/><rect x="8" y="9.0" width="6" height="1.1" rx="0.5" fill="#8a8a8a"/><rect x="8" y="11.0" width="6" height="1.1" rx="0.5" fill="#8a8a8a"/><rect x="8" y="13.0" width="6" height="1.1" rx="0.5" fill="#8a8a8a"/><path d="M1.6 4.4 L7.6 7.6 L1.6 10.8 Z" fill="#5fe8a0" stroke="#4a9a6a" stroke-width="0.4"/></svg><div class="ui tab" style="left:1672px;top:62px">Imports</div><svg style="position:absolute;left:1816px;top:64px" width="14" height="14" viewBox="0 0 14 14"><rect x="0.5" y="0.5" width="13" height="13" rx="2" fill="#b9b9b9" stroke="#a8a8a8"/><path d="M4 4 L10 10 M10 4 L4 10" stroke="#fff" stroke-width="2"/></svg><svg style="position:absolute;left:1872px;top:62px" width="16" height="16" viewBox="0 0 16 16"><rect x="0.5" y="0.5" width="15" height="15" rx="1.5" fill="#ffffff" stroke="#7a7a7a"/><rect x="1" y="1" width="14" height="2.6" fill="#05dcff"/><rect x="1" y="3.6" width="14" height="0.6" fill="#5a8a96"/><rect x="9" y="4" width="1.1" height="11.5" fill="#707070"/><rect x="2" y="7.0" width="6" height="1.1" rx="0.5" fill="#8a8a8a"/><rect x="2" y="9.0" width="6" height="1.1" rx="0.5" fill="#8a8a8a"/><rect x="2" y="11.0" width="6" height="1.1" rx="0.5" fill="#8a8a8a"/><rect x="2" y="13.0" width="6" height="1.1" rx="0.5" fill="#8a8a8a"/><path d="M8.4 4.4 L14.4 7.6 L8.4 10.8 Z" fill="#5fe8a0" stroke="#4a9a6a" stroke-width="0.4"/></svg><div class="ui tab" style="left:1964px;top:62px">Exports</div><div style="position:absolute;left:100px;top:84px;width:290px;height:1px;background:#a8a8a8"></div><div style="position:absolute;left:687px;top:84px;width:1298px;height:1px;background:#a8a8a8"></div><div style="position:absolute;left:100px;top:85px;width:53px;height:1057px;background:#fff"></div><div style="position:absolute;left:153px;top:85px;width:4px;height:1057px;background:#ececec"></div><div style="position:absolute;left:157px;top:85px;width:1828px;height:1057px;background:#fff;border-left:1px solid #0a72d4;border-top:1px solid #0a72d4;border-bottom:1px solid #0a72d4;box-sizing:border-box"></div><div style="position:absolute;left:158px;top:362px;width:1827px;height:23px;background:#e4e4e4"></div><div class="ln" style="top:87px">1</div><div class="ln" style="top:110px">2</div><div class="ln" style="top:133px">3</div><div class="ln" style="top:156px">4</div><div class="ln" style="top:179px">5</div><div class="ln" style="top:202px">6</div><div class="ln" style="top:225px">7</div><div class="ln" style="top:248px">8</div><div class="ln" style="top:271px">9</div><div class="ln" style="top:294px">10</div><div class="ln" style="top:317px">11</div><div class="ln" style="top:340px">12</div><div class="dot" style="top:346px"></div><div class="ln" style="top:363px">13</div><div class="dot" style="top:369px"></div><div class="ln" style="top:386px">14</div><div class="dot" style="top:392px"></div><div class="ln" style="top:409px">15</div><div class="dot" style="top:415px"></div><div class="ln" style="top:432px">16</div><div class="dot" style="top:438px"></div><div class="ln" style="top:455px">17</div><div class="dot" style="top:461px"></div><div class="ln" style="top:478px">18</div><div class="dot" style="top:484px"></div><div class="ln" style="top:501px">19</div><div class="dot" style="top:507px"></div><div class="ln" style="top:524px">20</div><div class="dot" style="top:530px"></div><div class="ln" style="top:547px">21</div><div class="ln" style="top:570px">22</div><div class="dot" style="top:576px"></div><div class="ln" style="top:593px">23</div><div class="dot" style="top:599px"></div><div class="ln" style="top:616px">24</div><div class="dot" style="top:622px"></div><div class="ln" style="top:639px">25</div><div class="dot" style="top:645px"></div><div class="ln" style="top:662px">26</div><div class="dot" style="top:668px"></div><div class="ln" style="top:685px">27</div><div class="ln" style="top:708px">28</div><div class="ln" style="top:731px">29</div><div class="ln" style="top:754px">30</div><div class="dot" style="top:760px"></div><div class="ln" style="top:777px">31</div><div class="dot" style="top:783px"></div><div class="ln" style="top:800px">32</div><div class="ln" style="top:823px">33</div><div class="dot" style="top:829px"></div><div class="ln" style="top:846px">34</div><div class="dot" style="top:852px"></div><div class="ln" style="top:869px">35</div><div class="dot" style="top:875px"></div><div class="ln" style="top:892px">36</div><div class="dot" style="top:898px"></div><div class="ln" style="top:915px">37</div><div class="dot" style="top:921px"></div><div class="ln" style="top:938px">38</div><div class="ln" style="top:961px">39</div><div class="ln" style="top:984px">40</div><div class="ln" style="top:1007px">41</div><div class="dot" style="top:1013px"></div><div class="ln" style="top:1030px">42</div><div class="ln" style="top:1053px">43</div><div class="ln" style="top:1076px">44</div><div class="dot" style="top:1082px"></div><div class="cl" style="top:87px"><span class="g">_UNKNOWN **__fastcall sub_598F00</span><span class="n">(</span><span class="g">__int64 a1, __int64 a2, __int64 a3, __int64 a4, __int64 a5, __int64 a6, __int128 a7</span><span class="n">)</span></div><div class="cl" style="top:110px"><span class="n">{</span></div><div class="cl" style="top:133px"><span class="g">  __int64 v7</span><span class="n">;</span><span class="c"> // r14</span></div><div class="cl" style="top:156px"><span class="g">  __int128 v8</span><span class="n">;</span><span class="c"> // xmm15</span></div><div class="cl" style="top:179px"><span class="g">  __int64 v9</span><span class="n">;</span><span class="c"> // rdx</span></div><div class="cl" style="top:202px"><span class="g">  _QWORD *v10</span><span class="n">;</span><span class="c"> // rax</span></div><div class="cl" style="top:225px"><span class="g">  _QWORD *v12</span><span class="n">;</span><span class="c"> // rax</span></div><div class="cl" style="top:248px"><span class="g">  void *dst</span><span class="n">;</span><span class="c"> // [rsp+40h] [rbp-18h]</span></div><div class="cl" style="top:271px"><span class="n">  __int64 v14;</span><span class="c"> // [rsp+48h] [rbp-10h] BYREF</span></div><div class="cl" style="top:294px"><span class="g">  _UNKNOWN *retaddr</span><span class="n">;</span><span class="c"> // [rsp+58h] [rbp+0h] BYREF</span></div><div class="cl" style="top:317px"></div><div class="cl" style="top:340px"><span class="n">  if ( </span><span class="g">(unsigned __int64)</span><span class="n">&amp;</span><span class="v">retaddr</span><span class="n"> &lt;= *(</span><span class="g">_QWORD *</span><span class="n">)(</span><span class="o">v7</span><span class="n"> + 16) )</span></div><div class="cl" style="top:363px"><span class="n">    </span><span class="b">sub_459DE0</span><span class="n">();</span></div><div class="cl" style="top:386px"><span class="n">  *((</span><span class="g">_QWORD *</span><span class="n">)&amp;</span><span class="v">a7</span><span class="n"> + 1) = *((</span><span class="g">_QWORD *</span><span class="n">)&amp;</span><span class="o">v8</span><span class="n"> + 1);</span></div><div class="cl" style="top:409px"><span class="n">  ((</span><span class="g">void (__fastcall *)(__int64 *)</span><span class="n">)</span><span class="b">loc_45C54B</span><span class="n">)(&amp;</span><span class="v">v14</span><span class="n">);</span></div><div class="cl" style="top:432px"><span class="n">  </span><span class="v">dst</span><span class="n"> = (</span><span class="g">void *</span><span class="n">)</span><span class="b">runtime_newobject</span><span class="n">();</span></div><div class="cl" style="top:455px"><span class="n">  </span><span class="b">qmemcpy</span><span class="n">(</span><span class="v">dst</span><span class="n">, &amp;</span><span class="b">src_</span><span class="n">, 0x5000u);</span></div><div class="cl" style="top:478px"><span class="n">  </span><span class="v">v14</span><span class="n"> = </span><span class="b">runtime_newobject</span><span class="n">();</span></div><div class="cl" style="top:501px"><span class="n">  </span><span class="b">sub_5989E0</span><span class="n">((</span><span class="g">__int64</span><span class="n">)</span><span class="v">dst</span><span class="n">, 16, </span><span class="o">v9</span><span class="n">, 20464, 0x5000u);</span></div><div class="cl" style="top:524px"><span class="n">  if ( </span><span class="v">dst</span><span class="n"> )</span></div><div class="cl" style="top:547px"><span class="n">  {</span></div><div class="cl" style="top:570px"><span class="n">    </span><span class="v">v12</span><span class="n"> = (</span><span class="g">_QWORD *</span><span class="n">)</span><span class="b">runtime_newobject</span><span class="n">();</span></div><div class="cl" style="top:593px"><span class="n">    </span><span class="v">v12</span><span class="n">[1] = 7;</span></div><div class="cl" style="top:616px"><span class="n">    *</span><span class="v">v12</span><span class="n"> = </span><span class="s">&quot;aes err&quot;</span><span class="n">;</span></div><div class="cl" style="top:639px"><span class="n">    ((</span><span class="g">void (__fastcall *)(char *, __int64)</span><span class="n">)</span><span class="b">loc_45C8AC</span><span class="n">)((</span><span class="g">char *</span><span class="n">)&amp;</span><span class="v">a7</span><span class="n"> + 8, </span><span class="v">v14</span><span class="n"> + 8);</span></div><div class="cl" style="top:662px"><span class="n">    return &amp;</span><span class="b">off_9516C0</span><span class="n">;</span></div><div class="cl" style="top:685px"><span class="n">  }</span></div><div class="cl" style="top:708px"><span class="n">  else</span></div><div class="cl" style="top:731px"><span class="n">  {</span></div><div class="cl" style="top:754px"><span class="n">    </span><span class="b">sub_46FE80</span><span class="n">(&amp;</span><span class="b">unk_94EEB0</span><span class="n">, 1);</span></div><div class="cl" style="top:777px"><span class="n">    if ( </span><span class="b">encoding_json_Unmarshal</span><span class="n">(&amp;</span><span class="b">unk_8081A0</span><span class="n">, </span><span class="v">v14</span><span class="n">) )</span></div><div class="cl" style="top:800px"><span class="n">    {</span></div><div class="cl" style="top:823px"><span class="n">      </span><span class="v">v10</span><span class="n"> = (</span><span class="g">_QWORD *</span><span class="n">)</span><span class="b">runtime_newobject</span><span class="n">();</span></div><div class="cl" style="top:846px"><span class="n">      </span><span class="v">v10</span><span class="n">[1] = 10;</span></div><div class="cl" style="top:869px"><span class="n">      *</span><span class="v">v10</span><span class="n"> = </span><span class="s">&quot;config err&quot;</span><span class="n">;</span></div><div class="cl" style="top:892px"><span class="n">      ((</span><span class="g">void (__fastcall *)(char *, __int64)</span><span class="n">)</span><span class="b">loc_45C8AC</span><span class="n">)((</span><span class="g">char *</span><span class="n">)&amp;</span><span class="v">a7</span><span class="n"> + 8, </span><span class="v">v14</span><span class="n"> + 8);</span></div><div class="cl" style="top:915px"><span class="n">      return &amp;</span><span class="b">off_9516C0</span><span class="n">;</span></div><div class="cl" style="top:938px"><span class="n">    }</span></div><div class="cl" style="top:961px"><span class="n">    else</span></div><div class="cl" style="top:984px"><span class="n">    {</span></div><div class="cl" style="top:1007px"><span class="n">      return (</span><span class="g">_UNKNOWN **</span><span class="n">)((</span><span class="g">__int64 (__fastcall *)(char *, __int64)</span><span class="n">)</span><span class="b">loc_45C8AC</span><span class="n">)((</span><span class="g">char *</span><span class="n">)&amp;</span><span class="v">a7</span><span class="n"> + 8, </span><span class="v">v14</span><span class="n"> + 8);</span></div><div class="cl" style="top:1030px"><span class="n">    }</span></div><div class="cl" style="top:1053px"><span class="n">  }</span></div><div class="cl" style="top:1076px"><span class="n">}</span></div><div style="position:absolute;left:158px;top:1116px;width:1827px;height:25px;background:#f0f0f0"></div><div style="position:absolute;left:161px;top:1120px;white-space:pre;font-family:'Liberation Mono',monospace;font-size:18.33px;line-height:22px;color:#000">001990C7</div><div style="position:absolute;left:250px;top:1117px;width:1px;height:22px;background:#d8d8d8"></div><div style="position:absolute;left:254px;top:1120px;white-space:pre;font-family:'Liberation Mono',monospace;font-size:18.33px;line-height:22px;color:#000">sub_598F00:13 (5990C7)</div><div style="position:absolute;left:498px;top:1117px;width:1px;height:22px;background:#d8d8d8"></div><div style="position:absolute;left:514px;top:1117px;width:1px;height:22px;background:#d8d8d8"></div><div style="position:absolute;left:0;top:1146px;width:1985px;height:1px;background:#868b92"></div><div style="position:absolute;left:0;top:1175px;width:1985px;height:1px;background:#8c9299"></div><div style="position:absolute;left:0;top:1176px;width:1985px;height:2px;background:#fafafa"></div><div style="position:absolute;left:0;top:1178px;width:1985px;height:1px;background:#888888"></div><div style="position:absolute;left:0;top:1179px;width:1985px;height:53px;background:#fff;overflow:hidden"><div class="cl ol" style="top:-5px">fastcall reflect_valueInterface(_QWORD, _QWORD, _QWORD, _QWORD);</div><div class="cl ol" style="top:18px">flect_Value_typeSlow(void);</div><div class="cl ol" style="top:41px">fastcall encoding_json_compact(_QWORD, _QWORD, _QWORD, _QWORD);</div></div></body></html>
